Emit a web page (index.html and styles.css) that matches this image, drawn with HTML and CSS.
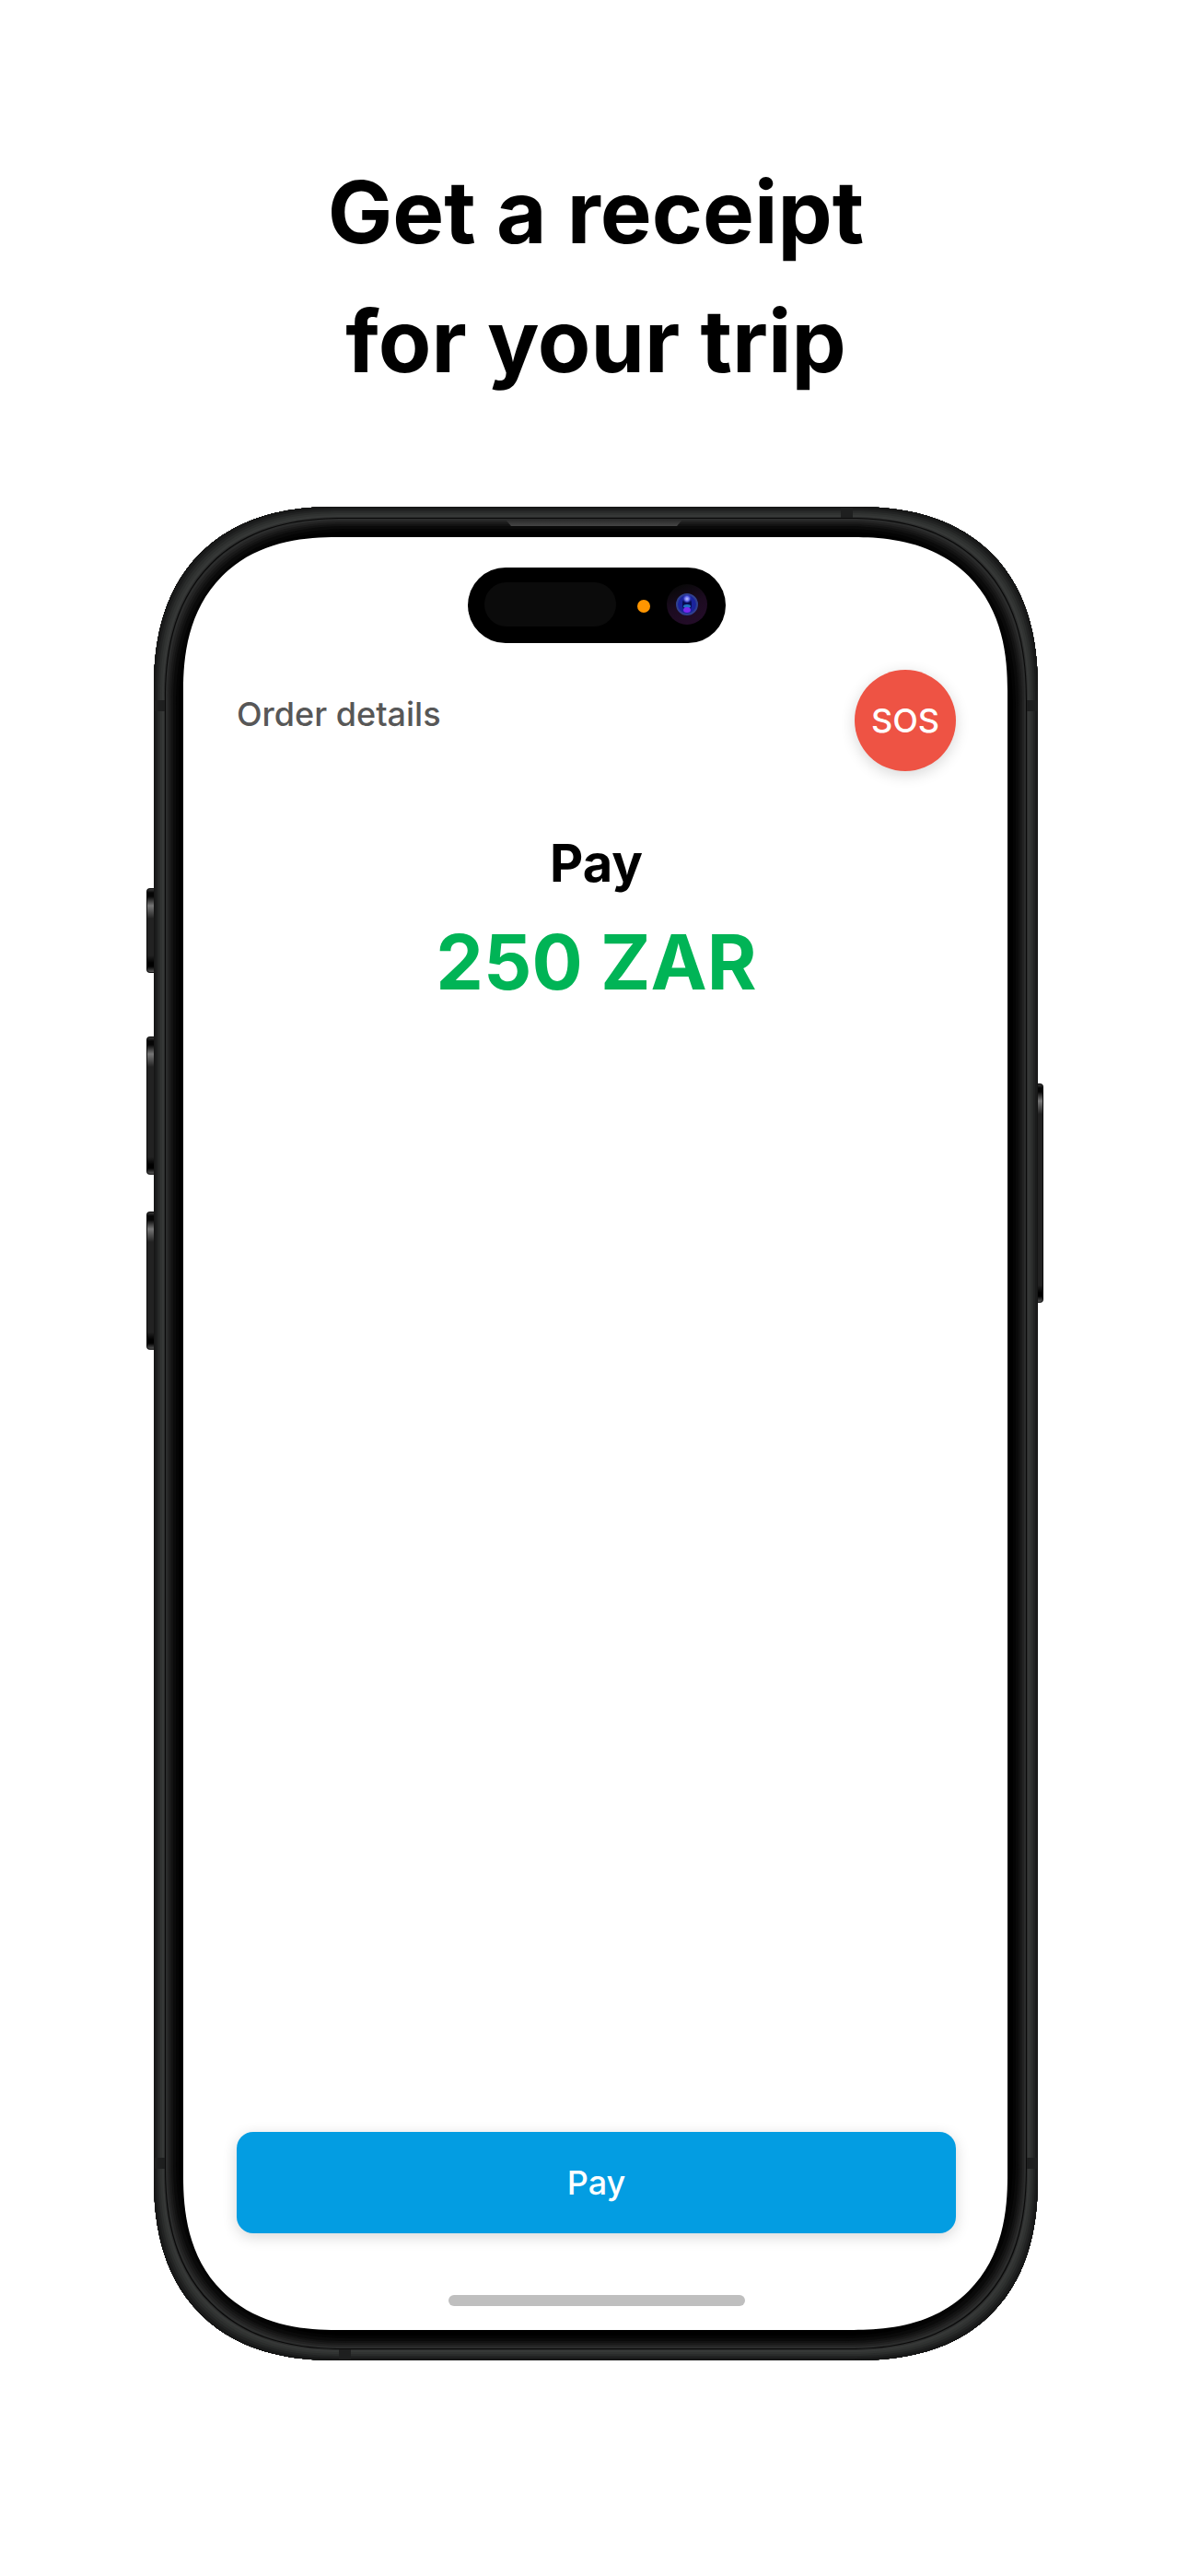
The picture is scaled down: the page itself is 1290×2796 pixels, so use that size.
FILE: index.html
```html
<!DOCTYPE html>
<html lang="en">
<head>
<meta charset="utf-8">
<meta name="viewport" content="width=device-width, initial-scale=1">
<title>Get a receipt for your trip</title>
<link rel="stylesheet" href="styles.css">
</head>
<body>
<main class="promo">
  <h1 class="headline">Get a receipt<br>for your trip</h1>
  <div class="phone">
    <span class="key key-action"></span>
    <span class="key key-up"></span>
    <span class="key key-down"></span>
    <span class="key key-power"></span>
    <span class="band band-left band-upper"></span>
    <span class="band band-right band-upper"></span>
    <span class="band band-left band-lower"></span>
    <span class="band band-right band-lower"></span>
    <span class="band band-top"></span>
    <span class="band band-bottom"></span>
    <span class="speaker"></span>
    <section class="screen">
      <svg class="island" width="280" height="84" viewBox="0 0 280 84" aria-hidden="true">
        <defs>
          <linearGradient id="ring" x1="0" y1="0" x2="0.4" y2="1">
            <stop offset="0.1" stop-color="#070807"/>
            <stop offset="0.6" stop-color="#1c0b20"/>
            <stop offset="1" stop-color="#220c27"/>
          </linearGradient>
          <radialGradient id="glint">
            <stop offset="0" stop-color="#c3c8ff"/>
            <stop offset="0.5" stop-color="#6a70ee"/>
            <stop offset="1" stop-color="#2a34c8" stop-opacity="0"/>
          </radialGradient>
        </defs>
        <rect y="1" width="280" height="82" rx="41" fill="#000"/>
        <rect x="18" y="17" width="143" height="48" rx="24" fill="#0b0b0b"/>
        <circle cx="191" cy="43" r="7" fill="#ff9500"/>
        <circle cx="238" cy="41" r="22" fill="url(#ring)"/>
        <circle cx="238" cy="41" r="11" fill="#1a239c" stroke="#30408f" stroke-width="2"/>
        <ellipse cx="238" cy="41" rx="5" ry="9" fill="#070b50"/>
        <circle cx="238" cy="35" r="5" fill="url(#glint)"/>
        <ellipse cx="238" cy="43" rx="4" ry="2" fill="#2274c4"/>
        <ellipse cx="238" cy="47" rx="4" ry="3" fill="#7a2af0"/>
      </svg>
      <header class="top">
        <h2 class="top-title">Order details</h2>
        <button class="sos" type="button">SOS</button>
      </header>
      <div class="due">
        <p class="due-label">Pay</p>
        <p class="due-amount">250 ZAR</p>
      </div>
      <button class="pay" type="button">Pay</button>
      <span class="home-bar"></span>
    </section>
  </div>
</main>
</body>
</html>
```
FILE: styles.css
```css
* {
  box-sizing: border-box;
}

body {
  margin: 0;
  background: #fff;
  color: #000;
  font-family: Inter, "Liberation Sans", sans-serif;
}

h1, h2, p {
  margin: 0;
}

button {
  border: 0;
  padding: 0;
  color: #fff;
  font: 500 36px/44px Inter, "Liberation Sans", sans-serif;
}

.promo {
  display: flex;
  flex-direction: column;
  min-height: 100vh;
  padding: 160px 163px 234px 167px;
}

.headline {
  margin-bottom: 110px;
  font-size: 94px;
  font-weight: 700;
  line-height: 140px;
  text-align: center;
}

/* Metal rim: concentric one- and two-pixel rings from the edge inwards */
.phone {
  position: relative;
  display: flex;
  flex: 1;
  padding: 33px 33px 33px 32px;
  border-radius: 178px;
  background: #000;
  box-shadow:
    inset 0 0 0 1px #151515,
    inset 0 0 0 3px #1a1b1b,
    inset 0 0 0 5px #222323,
    inset 0 0 0 7px #2a2c2b,
    inset 0 0 0 9px #313332,
    inset 0 0 0 11px #363837,
    inset 0 0 0 12px #2c2d2d,
    inset 0 0 0 13px #0a0a0a,
    inset 0 0 0 15px #2b2c2c,
    inset 0 0 0 17px #232323,
    inset 0 0 0 19px #1a1a1a,
    inset 0 0 0 21px #121212,
    inset 0 0 0 24px #0a0a0a,
    inset 0 0 0 27px #040404;
}

.screen {
  display: flex;
  flex: 1;
  flex-direction: column;
  padding: 32px 56px 26px 58px;
  border-radius: 145px;
  background: #fff;
}

/* Continuous corners where the browser can draw them */
@supports (corner-shape: superellipse(1.25)) {
  .phone {
    border-radius: 200px;
    corner-shape: superellipse(1.25);
  }

  .screen {
    border-radius: 167px;
    corner-shape: superellipse(1.25);
  }
}

.island {
  align-self: center;
}

.top {
  display: flex;
  justify-content: space-between;
  margin-top: 28px;
}

.top-title {
  padding-top: 26px;
  color: #575757;
  font-size: 36px;
  font-weight: 500;
  line-height: 44px;
}

.sos {
  width: 110px;
  height: 110px;
  border-radius: 50%;
  background: #ee5344;
  box-shadow: 0 4px 16px rgba(0, 0, 0, 0.16);
}

.due {
  margin-top: 66px;
  font-weight: 700;
  text-align: center;
}

.due-label {
  font-size: 56px;
  line-height: 68px;
}

.due-amount {
  color: #00b456;
  font-size: 82px;
  line-height: 148px;
}

.pay {
  height: 110px;
  margin-top: auto;
  border-radius: 18px;
  background: #039de2;
  box-shadow: 0 4px 16px rgba(0, 0, 0, 0.16);
}

.home-bar {
  align-self: center;
  width: 322px;
  height: 12px;
  margin-top: 67px;
  border-radius: 6px;
  background: #bfbfbf;
}

/* Side keys */
.key {
  position: absolute;
  left: -8px;
  width: 8px;
  border: 1px solid #0c0c0c;
  border-right: 0;
  border-radius: 4px 0 0 4px;
  background: linear-gradient(#3a3a3a, #050505 4px, #050505 8px, #777 18px, #222 32px, #222 calc(100% - 18px), #000 calc(100% - 10px), #000 calc(100% - 6px), #555);
}

.key-action {
  top: 414px;
  height: 92px;
}

.key-up {
  top: 575px;
  height: 150px;
}

.key-down {
  top: 765px;
  height: 150px;
}

.key-power {
  top: 626px;
  right: -6px;
  left: auto;
  width: 6px;
  height: 238px;
  border-right: 1px solid #0c0c0c;
  border-left: 0;
  border-radius: 0 4px 4px 0;
}

/* Antenna bands across the rim */
.band {
  position: absolute;
  width: 11px;
  height: 12px;
  background: #1e1f1f;
}

.band-left {
  left: 1px;
}

.band-right {
  right: 1px;
}

.band-upper {
  top: 210px;
}

.band-lower {
  bottom: 208px;
}

.band-top,
.band-bottom {
  width: 13px;
  height: 11px;
}

.band-top {
  top: 1px;
  right: 201px;
}

.band-bottom {
  bottom: 1px;
  left: 201px;
}

.speaker {
  position: absolute;
  top: 14px;
  left: calc(50% - 98px);
  width: 192px;
  height: 7px;
  background: linear-gradient(#2a2a2a, #454545);
  clip-path: polygon(0 0, 100% 0, calc(100% - 6px) 100%, 6px 100%);
}
```
